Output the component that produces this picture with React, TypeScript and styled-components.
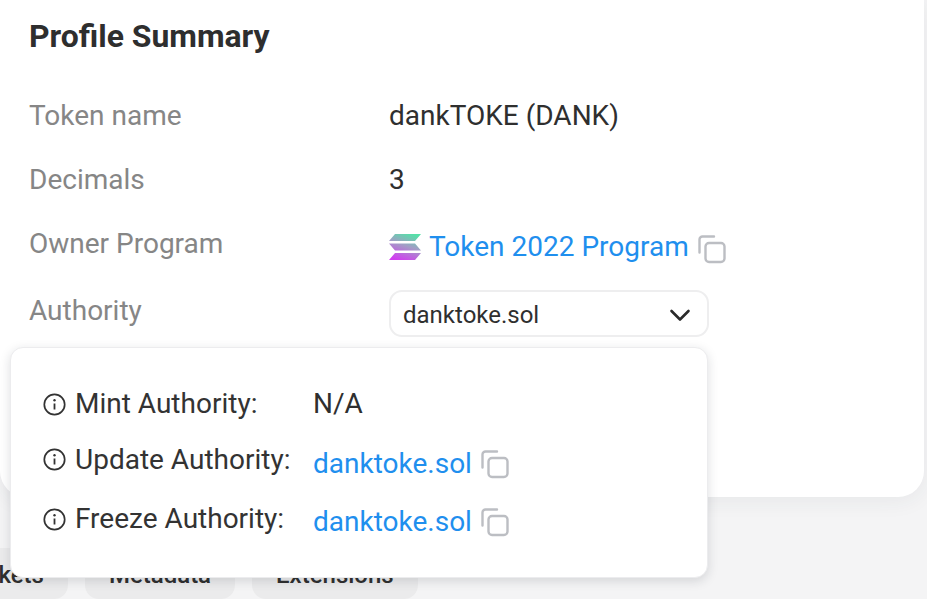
import styled, { createGlobalStyle } from 'styled-components';

const GlobalStyle = createGlobalStyle`
  html, body {
    margin: 0;
    padding: 0;
    background: #f4f4f5;
    overflow: hidden;
  }
  * { box-sizing: border-box; }
`;

const Page = styled.div`
  position: relative;
  width: 927px;
  height: 599px;
  overflow: hidden;
  font-family: Roboto, "Liberation Sans", sans-serif;
  color: #2f2f2f;
  background: #f4f4f5;
`;

const Card = styled.section`
  width: 924px;
  height: 497px;
  padding: 16px 29px 0;
  background: #fff;
  border-radius: 0 0 26px 26px;
  box-shadow: 0 3px 22px rgba(40, 50, 70, 0.07);
`;

const Title = styled.h2`
  margin: 0 0 28px;
  font-size: 31.9px;
  line-height: 40px;
  font-weight: 700;
  color: #2e2e2e;
`;

const Row = styled.div<{ $height?: number }>`
  display: grid;
  grid-template-columns: 360px 1fr;
  align-items: center;
  height: ${(p) => p.$height ?? 64}px;
`;

const Label = styled.span`
  font-size: 28px;
  line-height: 36px;
  color: #868686;
`;

const Value = styled.span<{ $top?: number }>`
  display: flex;
  align-items: center;
  margin-top: ${(p) => p.$top ?? 0}px;
  font-size: 28px;
  line-height: 36px;
  color: #2f2f2f;
`;

const LinkText = styled.a`
  color: #1f8fee;
  text-decoration: none;
`;

const Select = styled.div`
  display: flex;
  align-items: center;
  justify-content: space-between;
  width: 320px;
  height: 47px;
  margin-top: 4px;
  padding: 3px 16px 0 12px;
  font-size: 24px;
  color: #2f2f2f;
  background: #fff;
  border: 2px solid #eeeeef;
  border-radius: 13px;
`;

const Popover = styled.div`
  position: absolute;
  left: 10px;
  top: 347px;
  width: 698px;
  height: 231px;
  padding: 27px 32px 0;
  background: #fff;
  border: 1px solid #ececee;
  border-radius: 13px;
  box-shadow: 0 3px 11px rgba(30, 35, 50, 0.15);
`;

const AuthorityRow = styled.div`
  display: grid;
  grid-template-columns: 270px 1fr;
  align-items: center;
  height: 58.5px;
`;

const AuthorityLabel = styled.span<{ $lift: number }>`
  display: flex;
  align-items: center;
  gap: 9px;
  margin-bottom: ${(p) => p.$lift}px;
  font-size: 28px;
  line-height: 36px;
  color: #333;
`;

const Tabs = styled.div`
  display: flex;
  gap: 17px;
  margin: 51px 0 0 -68px;
`;

const Tab = styled.div`
  height: 51px;
  padding: 13px 24px 0;
  font-size: 24px;
  font-weight: 500;
  color: #2f2f2f;
  background: #ebebec;
  border-radius: 14px;
`;

const CopyGlyph = styled.svg<{ $left: number; $top: number }>`
  flex: none;
  margin-left: ${(p) => p.$left}px;
  margin-top: ${(p) => p.$top}px;
`;

const InfoGlyph = styled.svg`
  flex: none;
`;

const Chevron = styled.svg`
  flex: none;
`;

const SolanaLogo = styled.svg`
  flex: none;
  margin-right: 8px;
`;

function CopyIcon({ left = 8, top = 0 }: { left?: number; top?: number }) {
  return (
    <CopyGlyph $left={left} $top={top} width="30" height="30" viewBox="0 0 30 30" fill="none">
      <rect x="8.5" y="9" width="19" height="19" rx="3.5" stroke="#bcbec3" strokeWidth="2.4" />
      <path
        d="M17 2.5H5.5a3 3 0 0 0-3 3V18.5"
        stroke="#bcbec3"
        strokeWidth="2.4"
        strokeLinecap="round"
      />
    </CopyGlyph>
  );
}

function InfoIcon() {
  return (
    <InfoGlyph width="23" height="23" viewBox="0 0 23 23" fill="none">
      <circle cx="11.5" cy="11.5" r="10.2" stroke="#333" strokeWidth="1.7" />
      <path d="M11.5 10.5v6" stroke="#333" strokeWidth="1.8" />
      <circle cx="11.5" cy="7.2" r="1.2" fill="#333" />
    </InfoGlyph>
  );
}

function Solana() {
  return (
    <SolanaLogo width="32" height="26" viewBox="0 0 32 26">
      <defs>
        <linearGradient id="sol" x1="0.7" y1="0" x2="0.3" y2="1">
          <stop offset="0" stopColor="#55e0a8" />
          <stop offset="0.45" stopColor="#a39cc6" />
          <stop offset="1" stopColor="#d13cf0" />
        </linearGradient>
      </defs>
      <path
        d="M6 0h26l-6 7H0zM0 9.5h26l6 7H6zM6 19h26l-6 7H0z"
        fill="url(#sol)"
      />
    </SolanaLogo>
  );
}

const authorities = [
  { label: 'Mint Authority:', value: 'N/A', lift: 0 },
  { label: 'Update Authority:', value: 'danktoke.sol', lift: 6 },
  { label: 'Freeze Authority:', value: 'danktoke.sol', lift: 4 },
];

export default function App() {
  return (
    <Page>
      <GlobalStyle />
      <Card>
        <Title>Profile Summary</Title>
        <Row>
          <Label>Token name</Label>
          <Value>dankTOKE (DANK)</Value>
        </Row>
        <Row>
          <Label>Decimals</Label>
          <Value>3</Value>
        </Row>
        <Row>
          <Label>Owner Program</Label>
          <Value $top={6}>
            <Solana />
            <LinkText href="#">Token 2022 Program</LinkText>
            <CopyIcon top={4} />
          </Value>
        </Row>
        <Row $height={70}>
          <Label>Authority</Label>
          <Select>
            danktoke.sol
            <Chevron width="22" height="14" viewBox="0 0 22 14" fill="none">
              <path
                d="M2.5 3l8.5 8.5L19.5 3"
                stroke="#2a2a2a"
                strokeWidth="2.6"
                strokeLinecap="round"
                strokeLinejoin="round"
              />
            </Chevron>
          </Select>
        </Row>
      </Card>
      <Tabs>
        <Tab>Markets</Tab>
        <Tab>Metadata</Tab>
        <Tab>Extensions</Tab>
      </Tabs>
      <Popover>
        {authorities.map((a) => (
          <AuthorityRow key={a.label}>
            <AuthorityLabel $lift={a.lift}>
              <InfoIcon />
              {a.label}
            </AuthorityLabel>
            {a.value === 'N/A' ? (
              <Value>{a.value}</Value>
            ) : (
              <Value $top={2}>
                <LinkText href="#">{a.value}</LinkText>
                <CopyIcon />
              </Value>
            )}
          </AuthorityRow>
        ))}
      </Popover>
    </Page>
  );
}
